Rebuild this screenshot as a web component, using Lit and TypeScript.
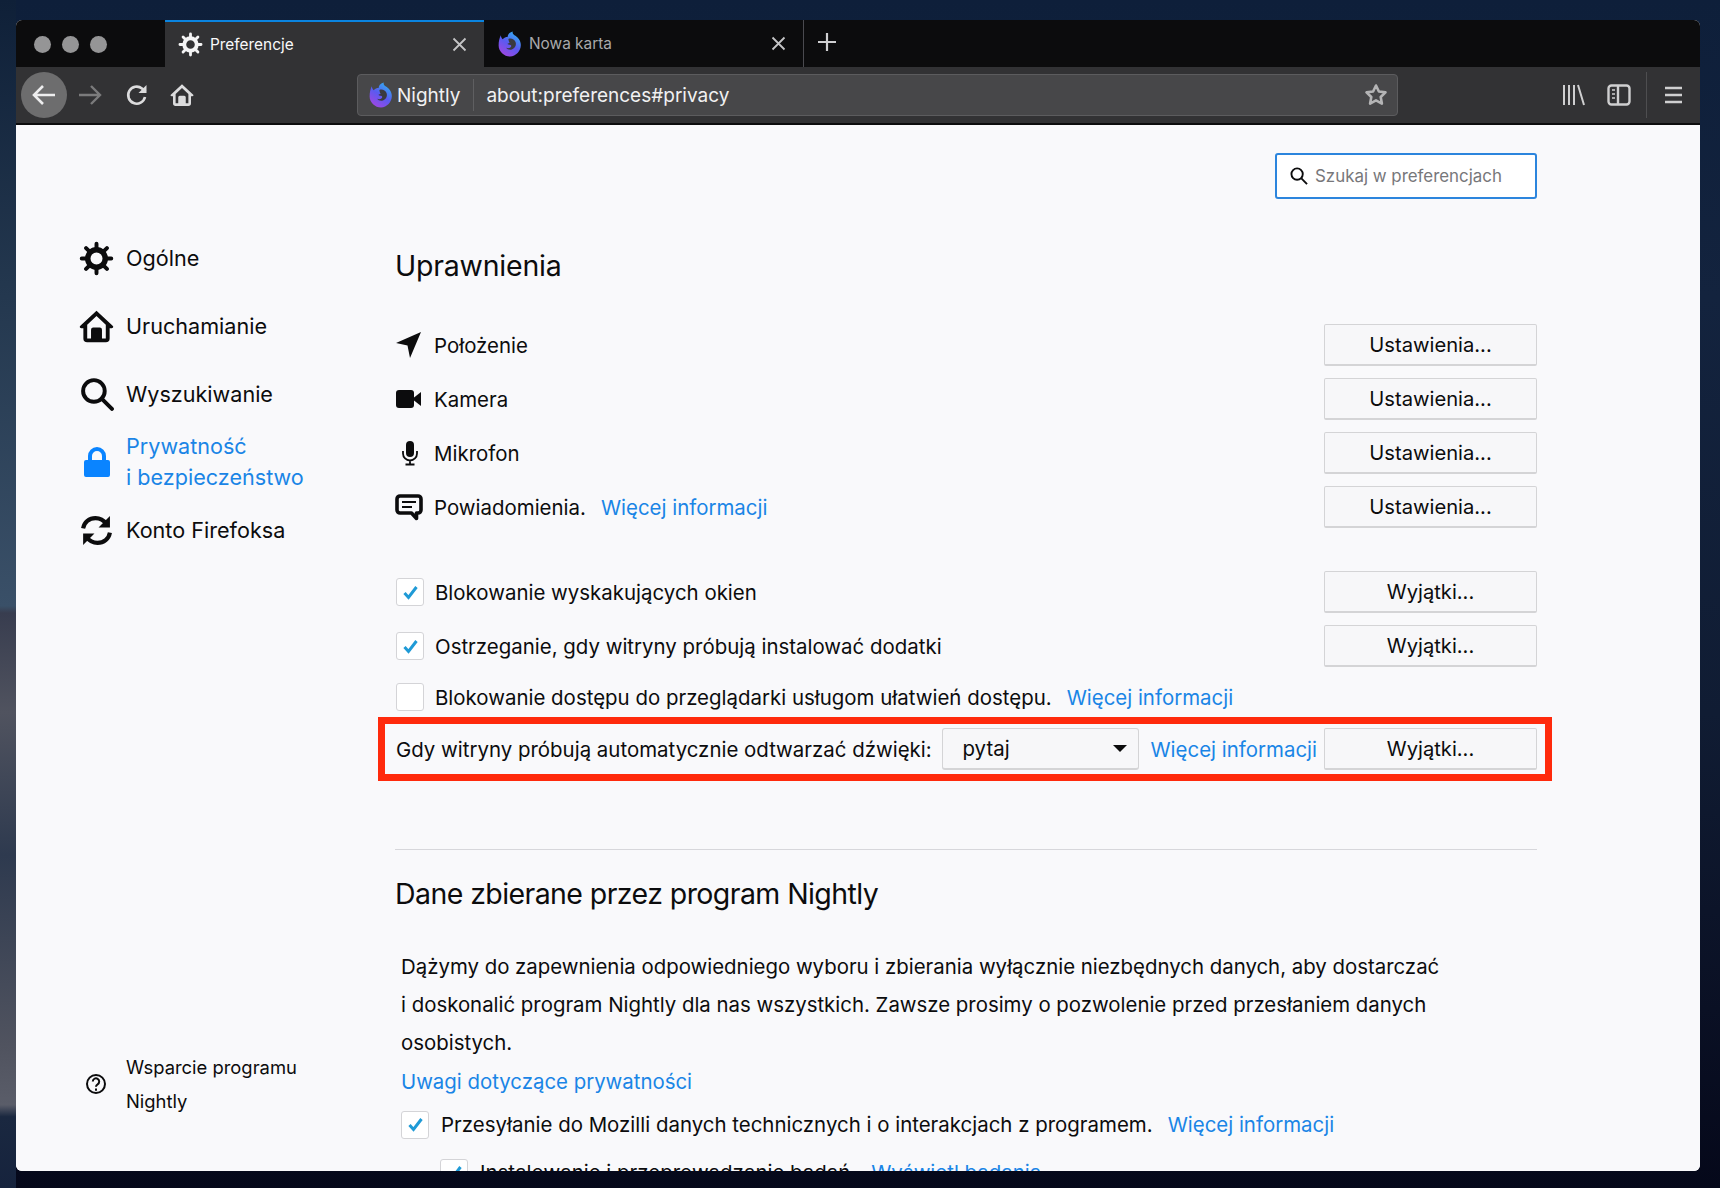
import { LitElement, html, css, svg } from "lit";
import { customElement } from "lit/decorators.js";

const logo = (size: number) => html`<svg width=${size} height=${size} viewBox="0 0 24 24">
  <defs><linearGradient id="nl" x1="0.8" y1="0" x2="0.2" y2="1"><stop offset="0" stop-color="#2fb4f0"/><stop offset="0.5" stop-color="#5a5af0"/><stop offset="1" stop-color="#a445e0"/></linearGradient></defs>
  <path fill="url(#nl)" d="M3.500 4c.2 1.500.8 2.800 1.800 3.600C6.400 6 8.200 5.200 10 5.200 9.800 3.500 11.200 1.500 14.500.5c-.3 1.300.2 2.400 1.300 3.200 3.300 1.800 6.200 4.800 6.200 9.300C22 18.500 17.500 23.500 12 23.500S1.500 18.800 1.500 13.300C1.500 9.800 2.200 6.800 3.500 4z"/>
  <path fill="#3a3a3e" d="M10.500 7.300c2.800-.9 5.600.4 6.600 2.900 1.100 2.900-.5 6-3.400 6.900-2.100.6-4.200-.1-5.300-1.600 1.500.6 3.100.5 4.200-.5 1-.9.6-2.100-.7-2.300-.9-.1-1.800-.3-2.200-1 .6-.4 1.300-.6 2-.6-.6-1-1-2.500-1.200-3.800z"/>
</svg>`;

const teeth = [0, 45, 90, 135];
const gear = (size: number, color: string) => html`<svg width=${size} height=${size} viewBox="0 0 32 32" fill="none" stroke=${color}>
  <circle cx="16" cy="16" r="8" stroke-width="5"/>
  ${teeth.map((a) => svg`<path d="M16 2.500v27" stroke-width="3.600" stroke-linecap="round" stroke-dasharray="5 17 5" transform=${`rotate(${a} 16 16)`}/>`)}
</svg>`;

const house = (size: number, color: string) => html`<svg width=${size} height=${size} viewBox="0 0 32 32">
  <path fill=${color} fill-rule="evenodd" d="M16 1.500 1 15.500c-.8 1 .1 2 1.200 2H4v9.500A3.500 3.500 0 0 0 7.500 30.500h17A3.500 3.500 0 0 0 28 27v-9.500h1.800c1.100 0 2-1 1.200-2L16 1.500zM16 6.500l8.500 8V27h-3.500v-8a2 2 0 0 0-2-2h-6a2 2 0 0 0-2 2v8H7.500V14.500L16 6.500z"/>
  <path fill=${color} d="M14.500 19.500h3V22h-3z"/>
</svg>`;

const check = html`<svg width="17" height="15" viewBox="0 0 17 15"><path d="M2.500 8 6.500 12.500 14.500 2" fill="none" stroke="#1f9ad6" stroke-width="3"/></svg>`;

const closeX = html`<svg width="15" height="15" viewBox="0 0 15 15"><path d="M1.500 1.500 13.500 13.500M13.500 1.500 1.500 13.500" stroke="#c4c4c6" stroke-width="1.800" fill="none"/></svg>`;

@customElement("app-root")
export class AppRoot extends LitElement {
  static styles = css`
    :host {
      display: block;
      box-sizing: border-box;
      width: 1720px;
      height: 1188px;
      padding: 20px 20px 17px 16px;
      background:
        linear-gradient(180deg, #0f2038 0, #24384f 25%, #3a5068 51%, #383d4f 51.6%, #50535f 60%, #2e3a4f 72%, #50535f 88%, #5a5d69 93%, #1a2840 94%, #16233d 100%) left top / 16px 100% no-repeat,
        linear-gradient(180deg, #0e1f3a 0, #13233e 25%, #101c33 60%, #0a1024 85%, #05081a 100%);
      font-family: Inter, "Liberation Sans", sans-serif;
      color: #0c0c0d;
      overflow: hidden;
    }
    .win { height: 1151px; display: flex; flex-direction: column; border-radius: 6px; overflow: hidden; background: #f9f9fb; }

    .tabs { height: 47px; flex: none; display: flex; background: #0c0c0d; }
    .lights { width: 149px; flex: none; display: flex; align-items: center; gap: 11px; padding: 2px 0 0 18px; box-sizing: border-box; }
    .lights i { width: 17px; height: 17px; border-radius: 50%; background: #959596; margin-top: -1px; }
    .tab { width: 319px; flex: none; box-sizing: border-box; display: flex; align-items: center; padding: 0 17px 0 14px; gap: 6px; font-size: 15.400px; color: #a9a9ab; }
    .tab.on { background: #323234; color: #f9f9fa; border-top: 3px solid #0a84e0; margin-top: -1px; height: 48px; padding-left: 13px; gap: 7px; padding-bottom: 1px; }
    .tab .t { flex: 1; }
    .tab.two { padding-left: 13px; padding-right: 17px; padding-bottom: 0; border-right: 1px solid #4a4a4f; width: 320px; }
    .plus { margin-left: 12px; margin-top: 11px; width: 22px; height: 22px; }

    .nav { height: 58px; flex: none; box-sizing: border-box; display: flex; align-items: center; background: #323234; border-bottom: 2px solid #0c0c0d; padding: 0 0 0 5px; }
    .back { width: 46px; height: 46px; border-radius: 50%; background: #6d6d6e; display: flex; align-items: center; justify-content: center; flex: none; }
    .nbtn { display: flex; align-items: center; justify-content: center; flex: none; width: 46px; }
    .nbtn.r { width: 48px; }
    .nbtn.h { width: 42px; }
    .urlbar { margin-left: 154px; width: 1041px; height: 42px; box-sizing: border-box; flex: none; display: flex; align-items: center; background: #474749; border: 1px solid #5c5c5e; border-radius: 4px; padding: 0 9px 0 10px; color: #f1f1f2; font-size: 19px; }
    .urlbar .nm { margin-left: 3px; }
    .urlbar .sep { width: 1px; height: 32px; background: #5f5f61; margin: 0 12px 0 13px; }
    .urlbar .u { flex: 1; }
    .tools { flex: 1; display: flex; align-items: center; justify-content: flex-start; padding-left: 164px; }
    .tools .side-ic { margin-left: 21px; }
    .tools .vs { width: 1px; height: 46px; background: #4e4e50; margin: 0 14px 0 15px; }

    .page { flex: 1; min-height: 0; display: flex; overflow: hidden; background: #f9f9fb; }
    .side { width: 379px; flex: none; box-sizing: border-box; padding: 99px 0 0 63px; display: flex; flex-direction: column; }
    .cat { display: flex; align-items: center; font-size: 21.600px; line-height: 31px; height: 68px; gap: 12px; }
    .cat .ic { width: 35px; height: 36px; display: flex; align-items: center; justify-content: center; flex: none; }
    .cat.on { color: #1a85e6; }
    .cat.on svg { fill: #0a84ff; }
    .support { margin-top: auto; margin-bottom: 53px; display: flex; align-items: center; font-size: 18.400px; line-height: 34px; }
    .support .q { width: 33px; display: flex; justify-content: center; margin-right: 14px; flex: none; }

    .main { width: 1142px; flex: none; box-sizing: border-box; padding-top: 28px; }
    .searchrow { display: flex; justify-content: flex-end; }
    .search { width: 262px; height: 46px; box-sizing: border-box; border: 2px solid #2c85dd; border-radius: 3px; background: #fff; display: flex; align-items: center; padding-left: 13px; gap: 7px; font-size: 16.900px; color: #77777a; }
    h2 { font-weight: 400; font-size: 28.500px; line-height: 40px; margin: 0; letter-spacing: -0.200px; white-space: nowrap; }
    .h1 { margin-top: 47px; }
    .perms { margin-top: 32px; }
    .row { height: 54px; display: flex; align-items: center; font-size: 20.450px; white-space: nowrap; }
    .row .pi { width: 39px; flex: none; display: flex; align-items: center; }
    .btn { margin-left: auto; width: 213px; height: 42px; box-sizing: border-box; flex: none; border: 1px solid #d4d4d6; border-bottom-width: 2px; border-radius: 2px; background: #f7f7f9; display: flex; align-items: center; justify-content: center; font-size: 20.200px; }
    a { color: #1a85e6; text-decoration: none; margin-left: 15px; }
    .gap { height: 31px; }
    .box { width: 28px; height: 28px; box-sizing: border-box; flex: none; background: #fff; border: 1px solid #d4d4d7; border-radius: 3px; display: flex; align-items: center; justify-content: center; margin-right: 12px; }
    .row.ck .box { margin-left: 1px; margin-right: 11px; }
    .row.short { height: 48px; }
    .outline { margin: -4px -15px 0 -17px; height: 64px; box-sizing: border-box; display: flex; align-items: center; font-size: 20.450px; white-space: nowrap; border: 7px solid #ff2a0c; padding: 0 8px 0 11px; }
    .outline .lbl { flex: 1; }
    .select { width: 197px; height: 42px; box-sizing: border-box; flex: none; border: 1px solid #d4d4d6; border-bottom-width: 2px; border-radius: 3px; background: #f7f7f9; display: flex; align-items: center; justify-content: space-between; padding: 0 11px 0 19px; }
    .caret { width: 0; height: 0; border: 7px solid transparent; border-top: 7px solid #0c0c0d; border-bottom: 0; }
    .outline a { margin-left: 11px; }
    .outline .btn { margin-left: 7px; }
    hr { border: 0; border-top: 1px solid #d7d7db; margin: 68px 0 0; }
    .h2 { margin-top: 24px; letter-spacing: -0.580px; }
    .para { margin: 33.500px 0 0 6px; font-size: 20.400px; line-height: 38.400px; width: 1043px; }
    .para a { margin: 0; display: block; }
    .row.data { margin: -1.500px 0 4px 6px; height: 50px; }
    .row.sub { margin-left: 45px; height: 38px; }
    .row svg { display: block; }
  `;

  private perm(icon: unknown, text: string, more = false) {
    return html`<div class="row"><span class="pi">${icon}</span><span>${text}</span>${more ? html`<a>Więcej informacji</a>` : ""}<span class="btn">Ustawienia...</span></div>`;
  }

  render() {
    return html`<div class="win">
      <div class="tabs">
        <div class="lights"><i></i><i></i><i></i></div>
        <div class="tab on">${gear(25, "#f4f4f5")}<span class="t">Preferencje</span>${closeX}</div>
        <div class="tab two">${logo(26)}<span class="t">Nowa karta</span>${closeX}</div>
        <svg class="plus" viewBox="0 0 22 22"><path d="M11 2v18M2 11h18" stroke="#cfcfd1" stroke-width="2.200"/></svg>
      </div>
      <div class="nav">
        <div class="back"><svg width="26" height="24" viewBox="0 0 26 24" fill="none" stroke="#ededee" stroke-width="2.600"><path d="M12 3 3 12l9 9M3 12h21"/></svg></div>
        <div class="nbtn"><svg width="26" height="24" viewBox="0 0 26 24" fill="none" stroke="#7b7b7c" stroke-width="2.400"><path d="M14 3l9 9-9 9M23 12H2"/></svg></div>
        <div class="nbtn r"><svg width="24" height="24" viewBox="0 0 24 24" fill="none" stroke="#dcdcdd" stroke-width="2.600"><path d="M20 14a8.500 8.500 0 1 1-3-8.500l3.500 3"/><path d="M21.500 2v8h-8" fill="#dcdcdd" stroke="none"/></svg></div>
        <div class="nbtn h">${house(24, "#dcdcdd")}</div>
        <div class="urlbar">${logo(26)}<span class="nm">Nightly</span><span class="sep"></span><span class="u">about:preferences#privacy</span>
          <svg width="24" height="24" viewBox="0 0 24 24" fill="none" stroke="#b4b4b5" stroke-width="2.600" stroke-linejoin="round"><path d="M12 2.500l2.900 6 6.600.9-4.800 4.600 1.200 6.600-5.900-3.200-5.900 3.200L7.300 14 2.500 9.400l6.600-.9z"/></svg>
        </div>
        <div class="tools">
          <svg width="24" height="24" viewBox="0 0 24 24" fill="none" stroke="#cfcfd0" stroke-width="2"><path d="M2 2v20M7 2v20M12 2v20M16 2l6 20"/></svg>
          <svg class="side-ic" width="24" height="24" viewBox="0 0 24 24" fill="none" stroke="#cfcfd0" stroke-width="2.400"><rect x="1.500" y="2.500" width="21" height="19" rx="3"/><path d="M11 2.500v19"/><path d="M5 7h3M5 11h3M5 15h3" stroke-width="1.600"/></svg>
          <span class="vs"></span>
          <svg width="24" height="24" viewBox="0 0 24 24" fill="none" stroke="#cfcfd0" stroke-width="2.600"><path d="M4 5h17M4 12h17M4 19h17"/></svg>
        </div>
      </div>
      <div class="page">
        <div class="side">
          <div class="cat"><span class="ic">${gear(35, "#0c0c0d")}</span>Ogólne</div>
          <div class="cat"><span class="ic">${house(35, "#0c0c0d")}</span>Uruchamianie</div>
          <div class="cat"><span class="ic"><svg width="34" height="34" viewBox="0 0 33 33" fill="none" stroke="#0c0c0d" stroke-width="3.800" stroke-linecap="round"><circle cx="13.500" cy="13.500" r="10.500"/><path d="M21 21l10 10"/></svg></span>Wyszukiwanie</div>
          <div class="cat on"><span class="ic"><svg width="28" height="32" viewBox="0 0 28 32"><path d="M14 1a9 9 0 0 0-9 9v4H3a2 2 0 0 0-2 2v13a2 2 0 0 0 2 2h22a2 2 0 0 0 2-2V16a2 2 0 0 0-2-2h-2v-4a9 9 0 0 0-9-9zm0 4a5 5 0 0 1 5 5v4H9v-4a5 5 0 0 1 5-5z"/></svg></span><span>Prywatność<br />i bezpieczeństwo</span></div>
          <div class="cat"><span class="ic"><svg width="33" height="33" viewBox="0 0 32 32" fill="none" stroke="#0c0c0d" stroke-width="4"><path d="M3 14C4 8 9 4 15 4c4 0 8 2 11 6"/><path d="M29 18c-1 6-6 10-12 10-4 0-8-2-11-6"/><path d="M29 2v11H18z" fill="#0c0c0d" stroke="none"/><path d="M3 30V19h11z" fill="#0c0c0d" stroke="none"/></svg></span>Konto Firefoksa</div>
          <div class="support"><span class="q"><svg width="22" height="22" viewBox="0 0 22 22" fill="none" stroke="#0c0c0d" stroke-width="2"><circle cx="11" cy="11" r="9"/><path d="M7.800 8.500a3.200 3.200 0 1 1 4.800 2.800c-1 .6-1.600 1.100-1.600 2.400"/><path d="M11 15.500v2.200"/></svg></span><span>Wsparcie programu<br />Nightly</span></div>
        </div>
        <div class="main">
          <div class="searchrow"><div class="search"><svg width="18" height="18" viewBox="0 0 19 19" fill="none" stroke="#0c0c0d" stroke-width="2"><circle cx="7.500" cy="7.500" r="6"/><path d="M12 12l6 6"/></svg>Szukaj w preferencjach</div></div>
          <h2 class="h1">Uprawnienia</h2>
          <div class="perms">
            ${this.perm(html`<svg width="27" height="28" viewBox="0 0 27 28" fill="#0c0c0d"><path d="M26 1 1 12l11.500 2.500L15 27z"/></svg>`, "Położenie")}
            ${this.perm(html`<svg width="27" height="20" viewBox="0 0 27 20" fill="#0c0c0d"><rect x="1" y="1" width="18" height="18" rx="3"/><path d="M19 8.500 26 3v14l-7-5.500z"/></svg>`, "Kamera")}
            ${this.perm(html`<svg style="margin-left:7px" width="16" height="26" viewBox="0 0 16 26"><rect x="4" y="1" width="8" height="16" rx="4" fill="#0c0c0d"/><path d="M1 11v2.500a7 7 0 0 0 14 0V11M8 20.500V24M3.500 24.500h9" fill="none" stroke="#0c0c0d" stroke-width="1.800"/></svg>`, "Mikrofon")}
            ${this.perm(html`<svg width="28" height="27" viewBox="0 0 28 27" fill="none"><path d="M5 2h18a3 3 0 0 1 3 3v11a3 3 0 0 1-3 3h-1.500V24.500L16.500 19H5a3 3 0 0 1-3-3V5a3 3 0 0 1 3-3z" stroke="#0c0c0d" stroke-width="3.600" stroke-linejoin="round"/><path d="M7 8h14M7 13h10" stroke="#0c0c0d" stroke-width="2"/></svg>`, "Powiadomienia.", true)}
          </div>
          <div class="gap"></div>
          <div class="row ck"><span class="box">${check}</span><span>Blokowanie wyskakujących okien</span><span class="btn">Wyjątki...</span></div>
          <div class="row ck"><span class="box">${check}</span><span>Ostrzeganie, gdy witryny próbują instalować dodatki</span><span class="btn">Wyjątki...</span></div>
          <div class="row ck short"><span class="box"></span><span>Blokowanie dostępu do przeglądarki usługom ułatwień dostępu.</span><a>Więcej informacji</a></div>
          <div class="outline"><span class="lbl">Gdy witryny próbują automatycznie odtwarzać dźwięki:</span><span class="select">pytaj<i class="caret"></i></span><a>Więcej informacji</a><span class="btn">Wyjątki...</span></div>
          <hr />
          <h2 class="h2">Dane zbierane przez program Nightly</h2>
          <div class="para">Dążymy do zapewnienia odpowiedniego wyboru i zbierania wyłącznie niezbędnych danych, aby dostarczać i doskonalić program Nightly dla nas wszystkich. Zawsze prosimy o pozwolenie przed przesłaniem danych osobistych.<a>Uwagi dotyczące prywatności</a></div>
          <div class="row data"><span class="box">${check}</span><span>Przesyłanie do Mozilli danych technicznych i o interakcjach z programem.</span><a>Więcej informacji</a></div>
          <div class="row sub"><span class="box">${check}</span><span>Instalowanie i przeprowadzanie badań.</span><a>Wyświetl badania</a></div>
        </div>
      </div>
    </div>`;
  }
}
